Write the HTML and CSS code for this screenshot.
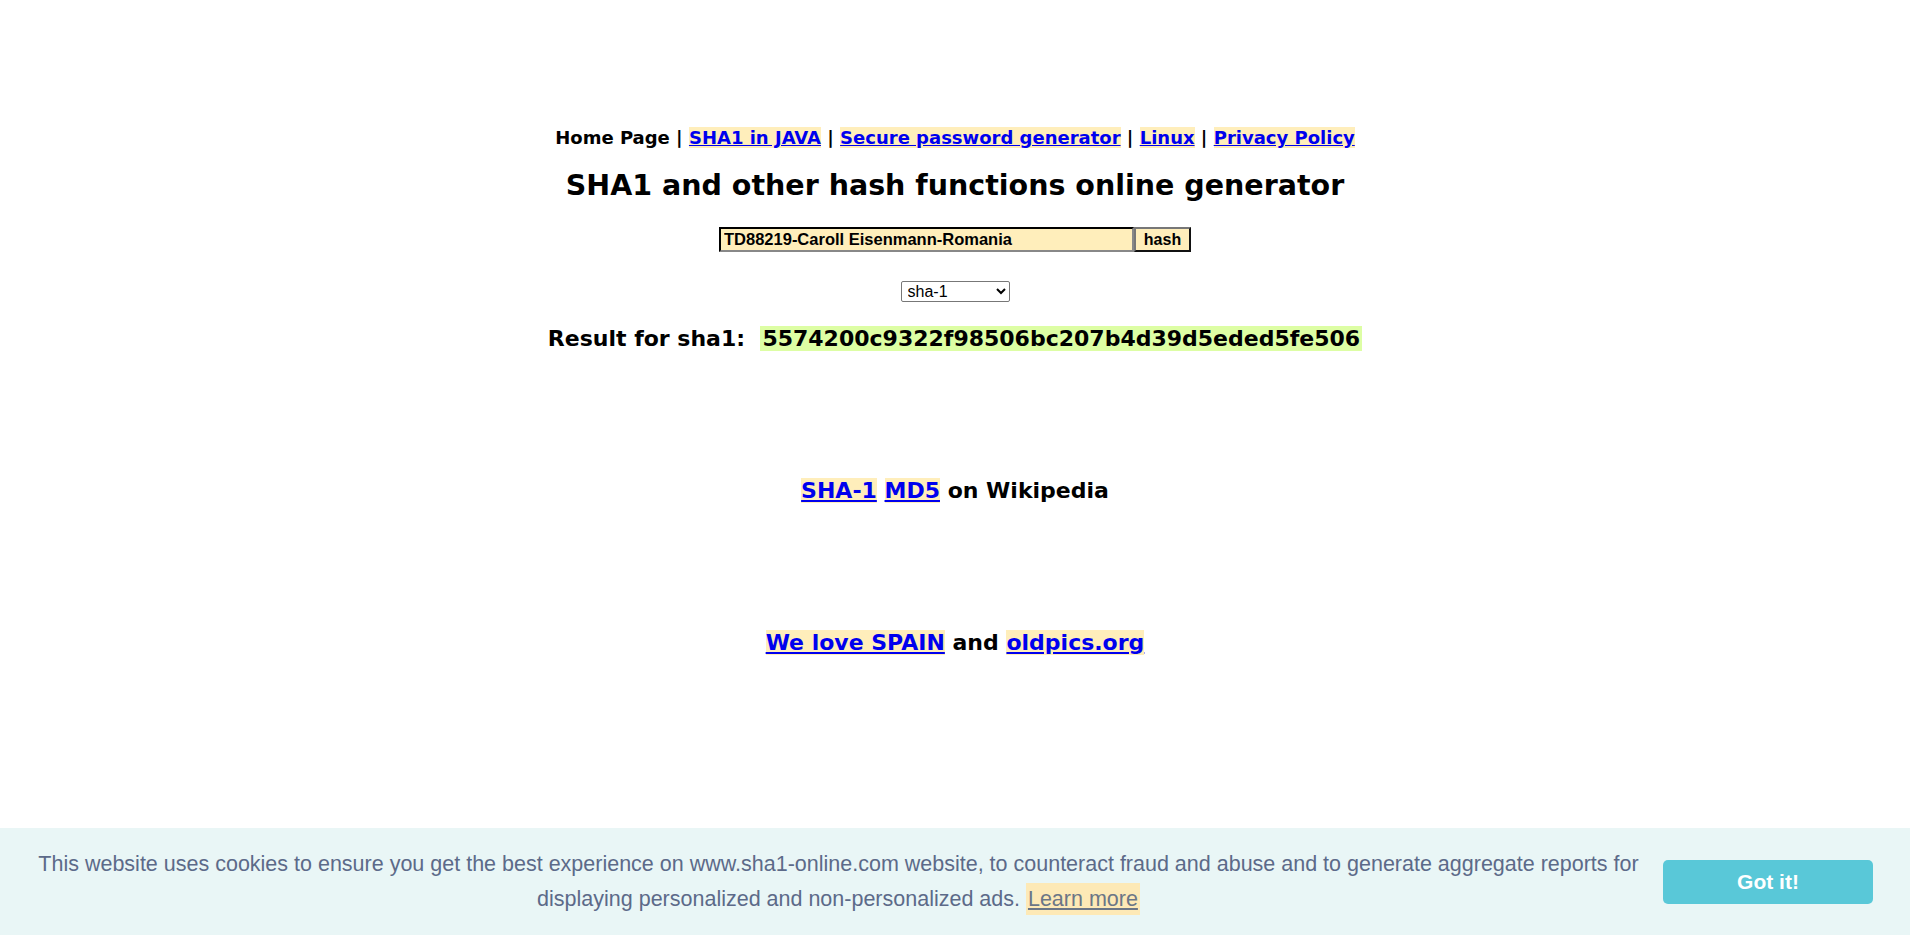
FILE: index.html
```html
<!DOCTYPE html>
<html lang="en">
<head>
<meta charset="utf-8">
<title>SHA1 online generator</title>
<link rel="stylesheet" href="styles.css">
</head>
<body>
<main class="page">
  <nav class="nav">
    <span>Home Page</span> | <a href="#" class="hl">SHA1 in JAVA</a> | <a href="#" class="hl">Secure password generator</a> | <a href="#" class="hl">Linux</a> | <a href="#" class="hl">Privacy Policy</a>
  </nav>
  <h1 class="title">SHA1 and other hash functions online generator</h1>
  <form class="form">
    <div class="row">
      <input class="text" type="text" value="TD88219-Caroll Eisenmann-Romania"><button class="btn" type="button">hash</button>
    </div>
    <div class="row sel-row">
      <select class="sel"><option>sha-1</option></select>
    </div>
  </form>
  <div class="result">Result for sha1:&nbsp; <span class="hash">5574200c9322f98506bc207b4d39d5eded5fe506</span></div>
  <div class="wiki"><a href="#" class="hl">SHA-1</a> <a href="#" class="hl">MD5</a> on Wikipedia</div>
  <div class="love"><a href="#" class="hl">We love SPAIN</a> and <a href="#" class="hl">oldpics.org</a></div>
</main>
<div class="cookie">
  <p class="cookie-msg">This website uses cookies to ensure you get the best experience on www.sha1-online.com website, to counteract fraud and abuse and to generate aggregate reports for displaying personalized and non-personalized ads. <a href="#" class="learn">Learn more</a></p>
  <a href="#" class="got">Got it!</a>
</div>
</body>
</html>
```
FILE: styles.css
```css
html, body { margin: 0; padding: 0; background: #fff; }
body { font-family: "DejaVu Sans", Verdana, sans-serif; color: #000; }
.page { text-align: center; padding-top: 126px; }
.nav { font-size: 18px; font-weight: bold; line-height: 24px; }
.hl { background: #ffeebb; color: #0000ee; text-decoration: underline; }
.title { font-size: 28.5px; font-weight: bold; margin: 18px 0 0; line-height: 36px; }
.form { margin-top: 23px; }
.row { display: flex; justify-content: center; }
.text { width: 415px; height: 25px; box-sizing: border-box; border: 2px inset #555; border-color: #222 #888 #888 #222; background: #ffeebb; font-family: "Liberation Sans", Arial, sans-serif; font-weight: bold; font-size: 16.5px; padding: 1px 3px; margin: 0; }
.btn { width: 57px; height: 25px; box-sizing: border-box; border: 2px solid #111; border-color: #777 #111 #111 #777; background: #ffeebb; font-family: "Liberation Sans", Arial, sans-serif; font-weight: bold; font-size: 16px; padding: 0; margin: 0; }
.sel-row { margin-top: 29px; }
.sel { width: 109px; height: 21px; font-family: "Liberation Sans", Arial, sans-serif; font-size: 16px; border: 1px solid #777; border-radius: 2px; background: #fff; padding: 0 2px; }
.result { font-size: 22px; font-weight: bold; margin-top: 23px; line-height: 28px; }
.hash { background: #ddfea4; padding: 0 2px; }
.wiki { font-size: 22px; font-weight: bold; margin-top: 124px; line-height: 28px; }
.love { font-size: 22px; font-weight: bold; margin-top: 124px; line-height: 28px; }
.cookie { position: fixed; left: 0; right: 0; bottom: 0; height: 107px; box-sizing: border-box; background: #e9f6f6; display: flex; align-items: center; padding: 0 37px 0 38px; gap: 24px; font-family: "Liberation Sans", Arial, sans-serif; }
.cookie-msg { flex: 1; margin: 0; text-align: center; color: #5c6a89; font-size: 21.5px; line-height: 35px; }
.learn { color: #6b7686; background: #fde9b6; text-decoration: underline; padding: 4px 2px; }
.got { width: 210px; height: 44px; border-radius: 5px; background: #59c8d8; color: #fff; font-weight: bold; font-size: 21px; display: flex; align-items: center; justify-content: center; text-decoration: none; flex: none; }
```
